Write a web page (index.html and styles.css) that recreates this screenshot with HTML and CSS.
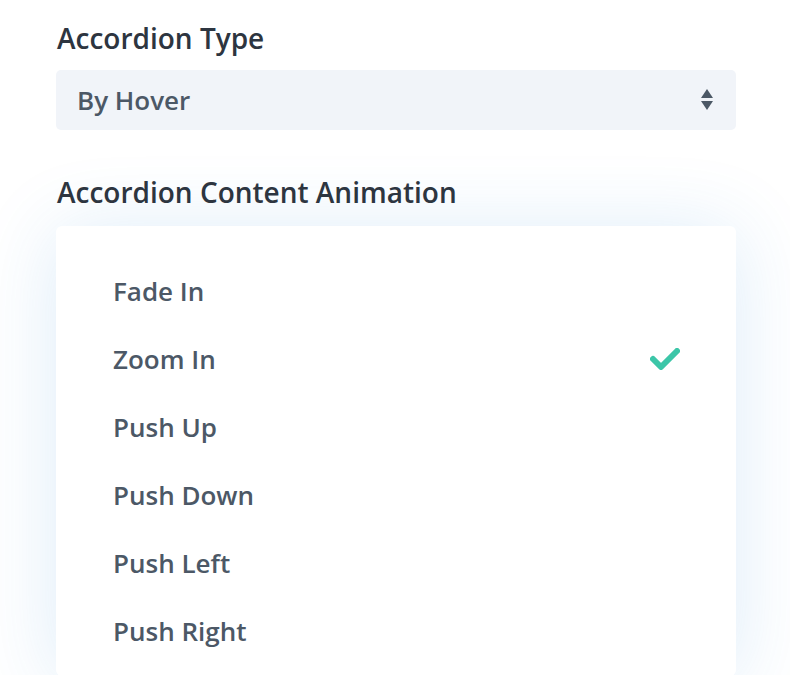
FILE: index.html
```html
<!DOCTYPE html>
<html>
<head>
<meta charset="utf-8">
<link rel="stylesheet" href="styles.css">
</head>
<body>
<div class="panel">
  <div class="field">
    <div class="label">Accordion Type</div>
    <div class="select">
      <span class="select-value">By Hover</span>
      <svg class="arrows" width="14" height="24" viewBox="0 0 14 24">
        <path d="M7 1 L13 10 L1 10 Z" fill="#4c5866"/>
        <path d="M1 13 L13 13 L7 22 Z" fill="#4c5866"/>
      </svg>
    </div>
  </div>
  <div class="field field-second">
    <div class="label">Accordion Content Animation</div>
    <div class="menu">
      <div class="option">Fade In</div>
      <div class="option">Zoom In
        <svg class="check" width="30" height="22" viewBox="0 0 30 22">
          <path d="M3 11 L11 19 L27 3" fill="none" stroke="#3cc6a8" stroke-width="6" stroke-linejoin="round" stroke-linecap="round"/>
        </svg>
      </div>
      <div class="option">Push Up</div>
      <div class="option">Push Down</div>
      <div class="option">Push Left</div>
      <div class="option">Push Right</div>
    </div>
  </div>
</div>
</body>
</html>
```

FILE: styles.css
```css
html, body {
  margin: 0;
  padding: 0;
  background: #ffffff;
  overflow: hidden;
}
body {
  font-family: "Open Sans", "Noto Sans", sans-serif;
  width: 790px;
  height: 675px;
}
.panel {
  padding: 19px 54px 0 56px;
}
.label {
  font-size: 28px;
  font-weight: 600;
  color: #2d3540;
  line-height: 38px;
  padding-left: 1px;
}
.select {
  margin-top: 13px;
  height: 60px;
  background: #f1f4f9;
  border-radius: 5px;
  display: flex;
  align-items: center;
  justify-content: space-between;
  padding: 0 22px 0 21px;
}
.select-value {
  font-size: 26px;
  font-weight: 600;
  color: #4c5866;
}
.arrows {
  display: block;
}
.field-second {
  margin-top: 43px;
}
.menu {
  margin-top: 15px;
  background: #ffffff;
  border-radius: 6px;
  box-shadow: 0 5px 80px rgba(43, 135, 218, 0.16);
  padding: 31px 0 0 57px;
  height: 419px;
  box-sizing: content-box;
}
.option {
  height: 68px;
  line-height: 68px;
  font-size: 26px;
  font-weight: 600;
  color: #4c5866;
  position: relative;
}
.check {
  position: absolute;
  right: 56px;
  top: 23px;
}
```
